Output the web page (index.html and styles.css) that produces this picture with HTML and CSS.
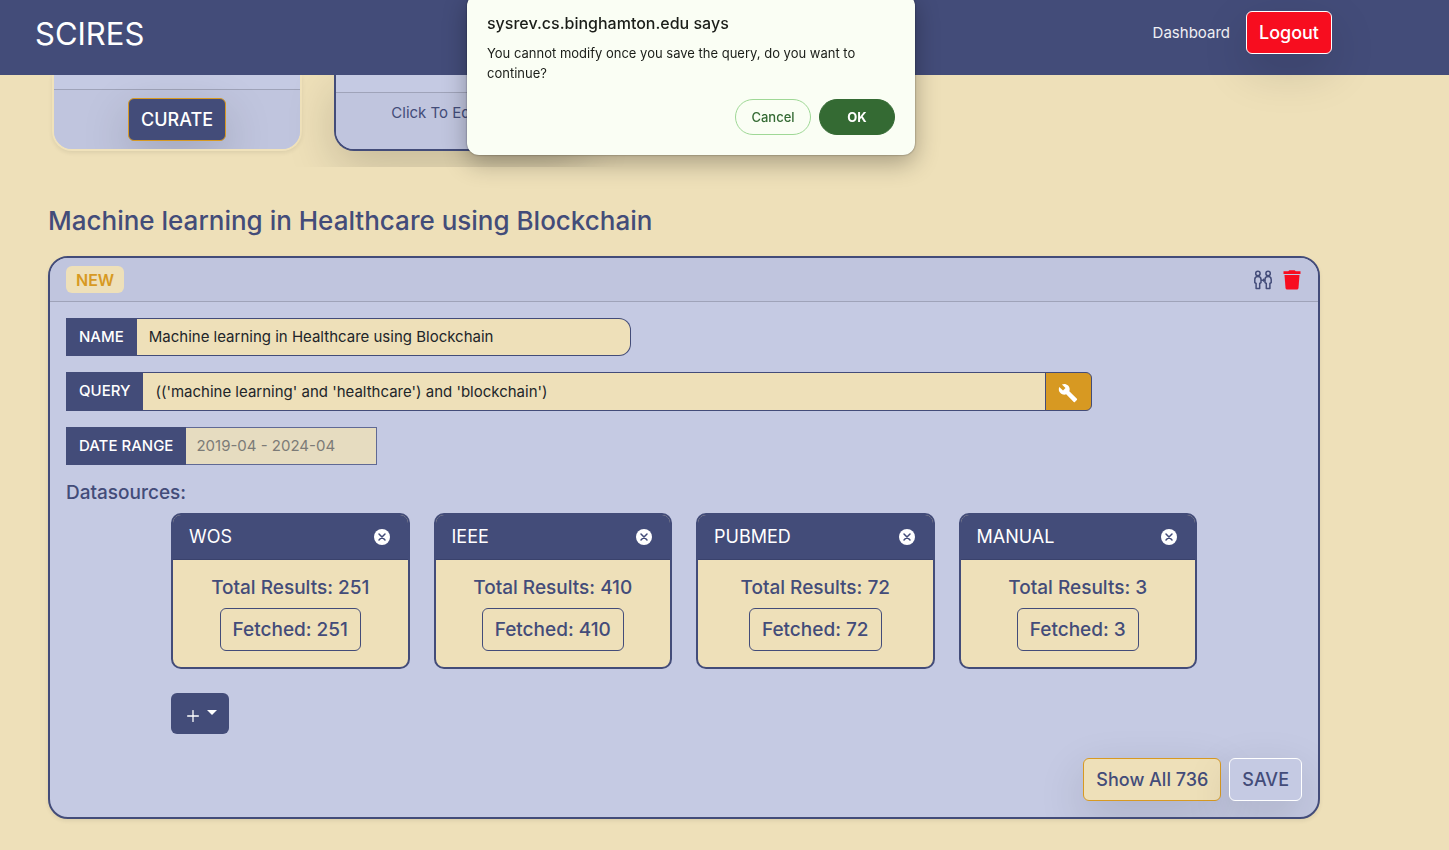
FILE: index.html
```html
<!DOCTYPE html>
<html lang="en">
<head>
<meta charset="utf-8">
<title>SCIRES</title>
<link rel="stylesheet" href="styles.css">
</head>
<body>
<header class="navbar">
  <a class="brand" href="#">SCIRES</a>
  <nav class="nav-links">
    <a class="nav-link" href="#">Dashboard</a>
    <button class="btn btn-logout" type="button">Logout</button>
  </nav>
</header>

<section class="projects">
  <article class="project project-plain">
    <div class="project-body"></div>
    <footer class="project-footer"><button class="btn btn-curate" type="button">CURATE</button></footer>
  </article>
  <article class="project project-active">
    <div class="project-body"></div>
    <footer class="project-footer">Click To Edit Query</footer>
  </article>
</section>

<main class="content">
  <h1 class="title">Machine learning in Healthcare using Blockchain</h1>
  <section class="panel">
    <header class="panel-header">
      <span class="badge">NEW</span>
      <div class="panel-actions">
        <button class="icon-btn" type="button" aria-label="Assign people">
          <svg class="icon-people" viewBox="0 0 20 20" fill="none" stroke="currentColor" stroke-width="1.5" stroke-linejoin="round">
            <circle cx="4.9" cy="3.5" r="2.2"/>
            <circle cx="15.1" cy="3.5" r="2.2"/>
            <path d="M4.9 6.5c-2 0-3.100 1-3.100 3v3.200l1.300.8v5.100h3.600v-5.100l1.300-.8V9.500c0-2-1.100-3-3.100-3z"/>
            <path d="M15.100 6.500c-2 0-3.100 1-3.100 3v3.200l1.300.8v5.100h3.600v-5.100l1.300-.8V9.500c0-2-1.100-3-3.100-3z"/>
            <path d="M8 10.200h3.500M10.200 8.900l1.500 1.300-1.500 1.300"/>
          </svg>
        </button>
        <button class="icon-btn icon-btn-danger" type="button" aria-label="Delete">
          <svg class="icon-trash" viewBox="0 0 18 20" fill="currentColor">
            <path d="M.5 1.300h4.800L6.300.3h5.400l1 1h4.800v2.600H.5z"/>
            <path d="M1.500 5h15l-1 13q-.2 1.500-1.700 1.500H4.200q-1.500 0-1.700-1.500z"/>
          </svg>
        </button>
      </div>
    </header>

    <div class="panel-body">
      <div class="field field-name">
        <label class="field-label" for="name">NAME</label>
        <input class="field-input" id="name" type="text" value="Machine learning in Healthcare using Blockchain">
      </div>
      <div class="field field-query">
        <label class="field-label" for="query">QUERY</label>
        <input class="field-input" id="query" type="text" value="(('machine learning' and 'healthcare') and 'blockchain')">
        <button class="field-tool" type="button" aria-label="Build query">
          <svg class="icon-wrench" viewBox="0 0 24 24" fill="currentColor"><path d="M22.700 19l-9.100-9.100c.9-2.300.4-5-1.500-6.900-2-2-5-2.400-7.400-1.300L9 6 6 9 1.600 4.700C.4 7.100.9 10.100 2.900 12.100c1.900 1.900 4.600 2.400 6.900 1.500l9.100 9.100c.4.4 1 .4 1.400 0l2.300-2.300c.5-.4.5-1.100.1-1.400z"/></svg>
        </button>
      </div>
      <div class="field field-date">
        <label class="field-label" for="range">DATE RANGE</label>
        <input class="field-input" id="range" type="text" value="2019-04 - 2024-04" disabled>
      </div>

      <h2 class="subtitle">Datasources:</h2>
      <div class="sources">
        <article class="source">
          <header class="source-header">WOS
            <button class="icon-btn" type="button" aria-label="Remove WOS"><svg class="icon-close" viewBox="0 0 16 16"><circle cx="8" cy="8" r="8" fill="#fff"/><path d="M5 5l6 6M11 5l-6 6" stroke="#434c79" stroke-width="1.500" stroke-linecap="round"/></svg></button>
          </header>
          <div class="source-body"><span>Total Results: 251</span><button class="btn btn-fetched" type="button">Fetched: 251</button></div>
        </article>
        <article class="source">
          <header class="source-header">IEEE
            <button class="icon-btn" type="button" aria-label="Remove IEEE"><svg class="icon-close" viewBox="0 0 16 16"><circle cx="8" cy="8" r="8" fill="#fff"/><path d="M5 5l6 6M11 5l-6 6" stroke="#434c79" stroke-width="1.500" stroke-linecap="round"/></svg></button>
          </header>
          <div class="source-body"><span>Total Results: 410</span><button class="btn btn-fetched" type="button">Fetched: 410</button></div>
        </article>
        <article class="source">
          <header class="source-header">PUBMED
            <button class="icon-btn" type="button" aria-label="Remove PUBMED"><svg class="icon-close" viewBox="0 0 16 16"><circle cx="8" cy="8" r="8" fill="#fff"/><path d="M5 5l6 6M11 5l-6 6" stroke="#434c79" stroke-width="1.500" stroke-linecap="round"/></svg></button>
          </header>
          <div class="source-body"><span>Total Results: 72</span><button class="btn btn-fetched" type="button">Fetched: 72</button></div>
        </article>
        <article class="source">
          <header class="source-header">MANUAL
            <button class="icon-btn" type="button" aria-label="Remove MANUAL"><svg class="icon-close" viewBox="0 0 16 16"><circle cx="8" cy="8" r="8" fill="#fff"/><path d="M5 5l6 6M11 5l-6 6" stroke="#434c79" stroke-width="1.500" stroke-linecap="round"/></svg></button>
          </header>
          <div class="source-body"><span>Total Results: 3</span><button class="btn btn-fetched" type="button">Fetched: 3</button></div>
        </article>
      </div>
      <button class="btn-add" type="button" aria-label="Add datasource">
        <svg class="icon-plus" viewBox="0 0 12 12" stroke="currentColor" stroke-width="1.300" stroke-linecap="round"><path d="M6 .6v10.800M.6 6h10.800"/></svg>
        <svg class="icon-caret" viewBox="0 0 10 5" fill="currentColor"><path d="M0 0h10L5 5z"/></svg>
      </button>
      <div class="panel-buttons">
        <button class="btn btn-show" type="button">Show All 736</button>
        <button class="btn btn-save" type="button">SAVE</button>
      </div>
    </div>
  </section>
</main>

<div class="dialog" role="alertdialog" aria-labelledby="dialog-title">
  <h2 class="dialog-title" id="dialog-title">sysrev.cs.binghamton.edu says</h2>
  <p class="dialog-text">You cannot modify once you save the query, do you want to continue?</p>
  <div class="dialog-buttons">
    <button class="pill" type="button">Cancel</button>
    <button class="pill pill-primary" type="button">OK</button>
  </div>
</div>
</body>
</html>
```
FILE: styles.css
```css
* { box-sizing: border-box; }

body {
  margin: 0;
  background: #eee0b9;
  color: #434c79;
  font: 400 15px/24px Inter, "Liberation Sans", sans-serif;
}

button, input { font: inherit; color: inherit; }
button { cursor: pointer; }

.navbar {
  position: relative;
  z-index: 1;
  display: flex;
  justify-content: space-between;
  align-items: flex-start;
  min-height: 75px;
  padding: 11px 117px 0 35px;
  background: #434c79;
  color: #fff;
}
.brand { color: #fff; text-decoration: none; font-size: 31px; line-height: 45px; }
.nav-links { display: flex; align-items: center; gap: 16px; }
.nav-link { color: #f0f0f4; text-decoration: none; }

.btn {
  padding: 6px 12px;
  border: 1px solid;
  border-radius: 6px;
  font-size: 18px;
  font-weight: 500;
  line-height: 29px;
  white-space: nowrap;
}
.btn-logout {
  border-color: #fff;
  background: #f70d1f;
  color: #fff;
  box-shadow: 0 16px 48px rgba(0, 0, 0, .14);
}
.btn-curate {
  border-color: #d79922;
  background: #434c79;
  color: #fff;
  box-shadow: 0 16px 48px rgba(0, 0, 0, .175);
}

.projects {
  display: flex;
  gap: 32px;
  padding: 0 52px 16px;
  overflow: hidden;
}
.project {
  flex: 0 0 250px;
  display: flex;
  flex-direction: column;
  border: 2px solid #f0e2bb;
  border-top: 0;
  border-radius: 0 0 20px 20px;
  background: #c5cae3;
  overflow: hidden;
  box-shadow: 0 2px 4px rgba(0, 0, 0, .075);
}
.project-active { border-color: #434c79; box-shadow: 0 16px 48px rgba(0, 0, 0, .175); }
.project-body { padding-top: 14px; }
.project-active .project-body { padding-top: 17px; }
.project-footer {
  flex: 1;
  padding: 8px 16px;
  border-top: 1px solid #9fa3b9;
  background: #c0c5de;
  text-align: center;
}

.content { padding: 37px 129px 30px 48px; }
.title { margin: 0 0 19px; font-size: 26px; font-weight: 450; line-height: 33px; }

.panel {
  border: 2px solid #434c79;
  border-radius: 20px;
  background: #c5cae3;
  overflow: hidden;
  box-shadow: 0 2px 4px rgba(0, 0, 0, .075);
}
.panel-header {
  display: flex;
  justify-content: space-between;
  align-items: center;
  padding: 8px 16px;
  border-bottom: 1px solid #9fa3b9;
  background: #c0c5de;
}
.badge {
  padding: 3px 10px 1px;
  border-radius: 6px;
  background: #eee0b9;
  color: #d79922;
  font-size: 16px;
  font-weight: 600;
  line-height: 23px;
}
.panel-actions { display: flex; align-items: center; gap: 10px; }
.icon-btn { display: flex; padding: 0; border: 0; background: none; color: inherit; }
.icon-btn-danger { color: #f70d1f; }
.icon-people { width: 20px; height: 20px; }
.icon-trash { width: 18px; height: 20px; margin-right: 1px; }

.panel-body { display: flex; flex-direction: column; padding: 16px; }
.field { display: flex; margin-bottom: 16px; }
.field-name { width: 45.7%; }
.field-query { width: 83%; }
.field-date { width: 25.2%; }
.field-label {
  padding: 6px 12px;
  background: #434c79;
  color: #fff;
  border: 1px solid #434c79;
  font-weight: 500;
  white-space: nowrap;
}
.field-input {
  flex: 1;
  min-width: 0;
  padding: 6px 12px;
  border: 1px solid #434c79;
  border-left: 0;
  border-radius: 0;
  background: #eee0b9;
  color: #212529;
}
.field-name .field-input { border-radius: 0 12px 12px 0; }
.field-date .field-input { padding: 6px 10px; border-color: #606994; background: #e6dcc0; color: #7c7b77; }
.field-query .field-label { padding-bottom: 7px; }
.field-tool {
  display: flex;
  align-items: center;
  justify-content: center;
  width: 47px;
  margin-left: -1px;
  padding: 3px 0 0;
  border: 1px solid #434c79;
  border-radius: 0 6px 6px 0;
  background: #d79922;
  color: #fff;
}
.icon-wrench { width: 20px; height: 20px; }

.subtitle { margin: 0 0 8px; font-size: 19px; font-weight: 450; line-height: 24px; }
.sources {
  display: grid;
  grid-template-columns: repeat(4, 1fr);
  gap: 24px;
  margin: 0 105px;
}
.source {
  border: 2px solid #434c79;
  border-radius: 10px;
  background: #eee0b9;
  overflow: hidden;
}
.source-header {
  display: flex;
  align-items: center;
  justify-content: space-between;
  padding: 8px 18px 8px 16px;
  border-bottom: 1px solid #3a426c;
  background: #434c79;
  color: #fff;
  font-size: 18px;
  line-height: 28px;
}
.icon-close { width: 16px; height: 16px; }
.source-body {
  display: flex;
  flex-direction: column;
  align-items: center;
  gap: 8px;
  padding: 16px;
  font-size: 19px;
  font-weight: 450;
}
.btn-fetched { border-color: #434c79; background: transparent; font-size: 19px; font-weight: 450; }
.btn-add {
  display: flex;
  align-items: center;
  gap: 8px;
  align-self: flex-start;
  height: 41px;
  margin: 24px 105px;
  padding: 0 12px 0 16px;
  border: 0;
  border-radius: 6px;
  background: #434c79;
  color: #fff;
}
.icon-plus { width: 12px; height: 12px; margin-top: 4px; }
.icon-caret { width: 10px; height: 5px; margin-bottom: 2px; }
.panel-buttons { display: flex; justify-content: flex-end; gap: 8px; }
.panel-buttons .btn { box-shadow: 0 16px 48px rgba(0, 0, 0, .14); }
.btn-show { border-color: #d79922; background: #eee0b9; }
.btn-save { border-color: #fff; background: #c5cae3; }

.dialog {
  position: fixed;
  z-index: 2;
  top: -6px;
  left: 467px;
  width: 448px;
  padding: 18px 20px 20px;
  border-radius: 12px;
  background: #fafef4;
  color: #1a1d18;
  box-shadow: 0 0 2px rgba(0, 0, 0, .5), 0 8px 24px rgba(0, 0, 0, .3);
}
.dialog-title { margin: 0 0 8px; font-size: 16px; font-weight: 500; line-height: 23px; }
.dialog-text { margin: 0 0 16px; font-size: 13px; line-height: 20px; }
.dialog-buttons { display: flex; justify-content: flex-end; gap: 8px; }
.pill {
  width: 76px;
  height: 36px;
  padding: 0;
  border: 1px solid #9fd896;
  border-radius: 18px;
  background: transparent;
  color: #346a33;
  font-size: 13px;
  font-weight: 500;
}
.pill-primary { border-color: #346a33; background: #346a33; color: #fff; font-weight: 700; }
```
